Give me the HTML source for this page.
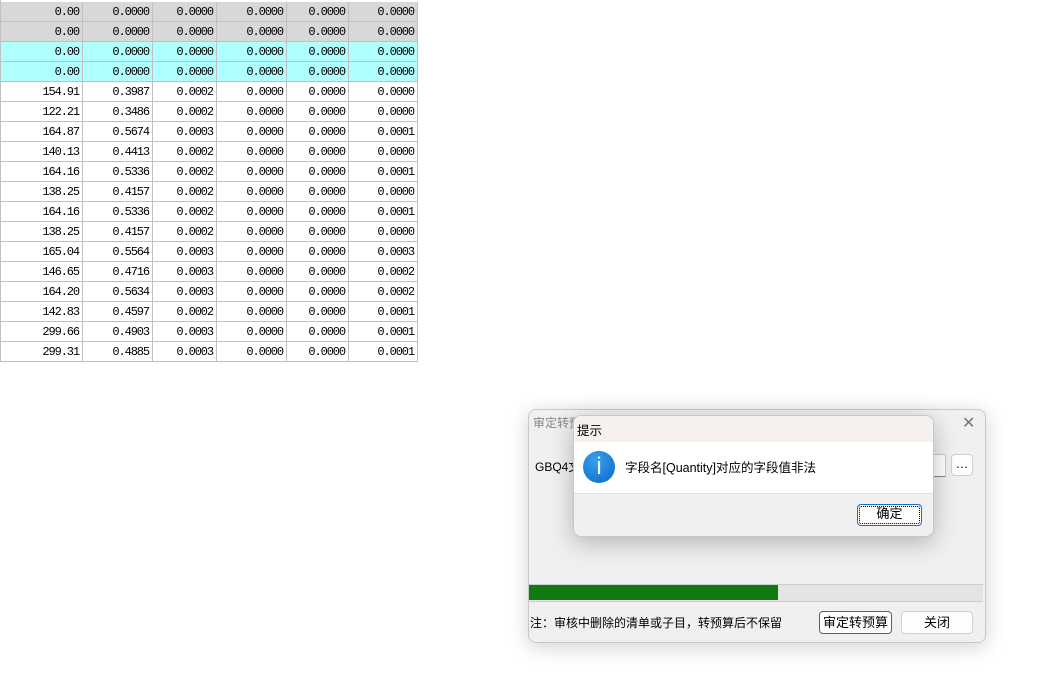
<!DOCTYPE html>
<html><head><meta charset="utf-8"><style>
body{margin:0;width:1045px;height:680px;background:#fff;position:relative;overflow:hidden;font-family:"Liberation Sans","Noto Sans CJK SC",sans-serif}
.c{position:absolute;height:19px;border-right:1px solid #c0c0c0;border-bottom:1px solid #c0c0c0;font-family:"Liberation Mono",monospace;font-size:12px;letter-spacing:-1.1px;text-align:right;line-height:20px;box-sizing:content-box;padding-right:3px;color:#000}
.a{position:absolute}
.btn{position:absolute;background:#fdfdfd;border:1px solid #d0d0d0;border-radius:4px;font-size:13px;text-align:center;box-sizing:border-box}
</style></head><body>
<div id="g"></div>
<script>
var xs=[1,83,153,217,287,349,418];
var rows=[["0.00","0.0000","0.0000","0.0000","0.0000","0.0000","#d8d8d8"],["0.00","0.0000","0.0000","0.0000","0.0000","0.0000","#d8d8d8"],["0.00","0.0000","0.0000","0.0000","0.0000","0.0000","#b0ffff"],["0.00","0.0000","0.0000","0.0000","0.0000","0.0000","#b0ffff"],
["154.91","0.3987","0.0002","0.0000","0.0000","0.0000"],["122.21","0.3486","0.0002","0.0000","0.0000","0.0000"],["164.87","0.5674","0.0003","0.0000","0.0000","0.0001"],["140.13","0.4413","0.0002","0.0000","0.0000","0.0000"],["164.16","0.5336","0.0002","0.0000","0.0000","0.0001"],["138.25","0.4157","0.0002","0.0000","0.0000","0.0000"],["164.16","0.5336","0.0002","0.0000","0.0000","0.0001"],["138.25","0.4157","0.0002","0.0000","0.0000","0.0000"],["165.04","0.5564","0.0003","0.0000","0.0000","0.0003"],["146.65","0.4716","0.0003","0.0000","0.0000","0.0002"],["164.20","0.5634","0.0003","0.0000","0.0000","0.0002"],["142.83","0.4597","0.0002","0.0000","0.0000","0.0001"],["299.66","0.4903","0.0003","0.0000","0.0000","0.0001"],["299.31","0.4885","0.0003","0.0000","0.0000","0.0001"]];
var h="<div class='a' style='left:0;top:0;width:1px;height:362px;background:#c0c0c0'></div>";
rows.forEach(function(r,i){for(var j=0;j<6;j++){var l=xs[j],w=xs[j+1]-l-4;h+="<div class='c' style='left:"+l+"px;top:"+(i*20+2)+"px;width:"+w+"px;background:"+(r[6]||"#fff")+"'>"+r[j]+"</div>";}});
document.getElementById("g").innerHTML=h;
</script>
<div class="a" style="left:528px;top:409px;width:456px;height:232px;background:#f0f0f0;border:1px solid #c8c8c8;border-radius:8px;box-shadow:0 4px 20px rgba(0,0,0,.18)"></div>
<div class="a" style="left:533px;top:414px;font-size:12px;color:#888">审定转预算</div>
<div class="a" style="left:962px;top:413px;font-size:16px;color:#777;font-weight:300">✕</div>
<div class="a" style="left:535px;top:458px;font-size:12px">GBQ4文</div>
<div class="a" style="left:900px;top:454px;width:44px;height:21px;background:#fff;border:1px solid #ccc;border-bottom-color:#888"></div>
<div class="btn" style="left:951px;top:454px;width:22px;height:22px;line-height:18px">…</div>
<div class="a" style="left:529px;top:584px;width:454px;height:16px;background:#e4e4e4;border-top:1px solid #ccc;border-bottom:1px solid #ccc"></div>
<div class="a" style="left:529px;top:585px;width:249px;height:15px;background:#107a10"></div>
<div class="a" style="left:530px;top:614px;font-size:12px">注：审核中删除的清单或子目，转预算后不保留</div>
<div class="btn" style="left:819px;top:611px;width:73px;height:23px;line-height:21px;border-color:#1a6fc9">审定转预算</div>
<div class="btn" style="left:901px;top:611px;width:72px;height:23px;line-height:21px">关闭</div>
<div class="a" style="left:573px;top:415px;width:359px;height:120px;background:#f0f0f0;border:1px solid #c8c8c8;border-radius:8px;box-shadow:0 6px 24px rgba(0,0,0,.25);overflow:hidden">
<div class="a" style="left:0;top:0;width:359px;height:26px;background:#f6f1ef"></div>
<div class="a" style="left:3px;top:4px;font-size:12.5px">提示</div>
<div class="a" style="left:0;top:26px;width:359px;height:51px;background:#fff;border-bottom:1px solid #e0e0e0"></div>
<div class="a" style="left:9px;top:35px;width:32px;height:32px;border-radius:50%;background:radial-gradient(circle at 40% 30%,#3aa0ee,#0768c8);color:#fff;text-align:center;font:24px/32px 'Liberation Sans',sans-serif">i</div>
<div class="a" style="left:51px;top:41px;font-size:12.5px">字段名[Quantity]对应的字段值非法</div>
<div class="btn" style="left:283px;top:88px;width:65px;height:22px;line-height:18px;border-color:#1a6fc9;outline:1px dotted #000;outline-offset:-3px">确定</div>
</div>
</body></html>
